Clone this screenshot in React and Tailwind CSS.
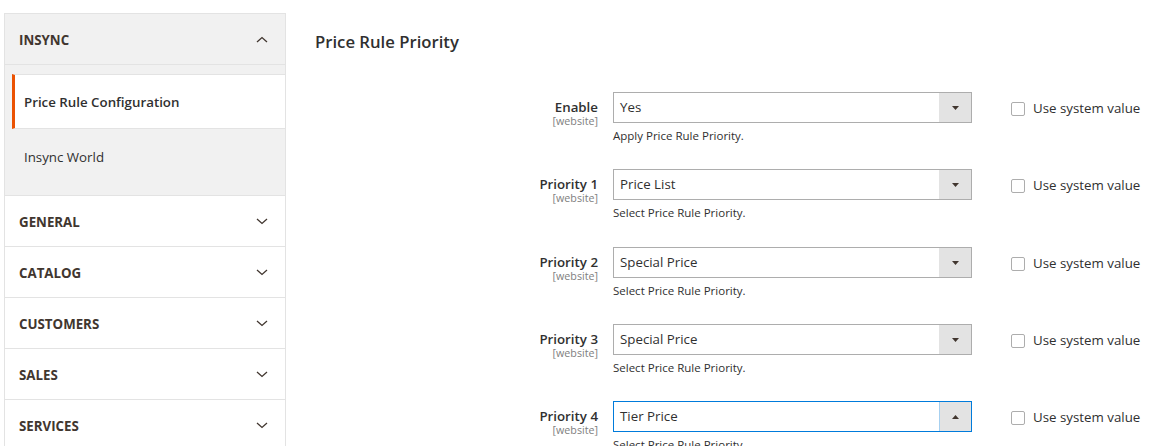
import React from "react";

const font = { fontFamily: '"Open Sans", "Noto Sans", sans-serif' };

function Chevron({ up }) {
  return (
    <svg width="12" height="7" viewBox="0 0 12 7" className="block">
      <polyline
        points={up ? "1,6 6,1.5 11,6" : "1,1 6,5.5 11,1"}
        fill="none"
        stroke="#41362f"
        strokeWidth="1.3"
      />
    </svg>
  );
}

function Section({ title }) {
  return (
    <div className="flex h-[51px] items-center justify-between border-b border-[#e3e3e3] bg-white pl-[14px] pr-[17px]">
      <span className="mt-[4px] text-[13.3px] font-bold uppercase text-[#41362f]">{title}</span>
      <Chevron />
    </div>
  );
}

function Row({ label, value, note, open, tall }) {
  return (
    <div className={"flex items-start " + (tall ? "h-[78px]" : "h-[77px]")}>
      <div className="w-[283px] pt-[7px] text-right">
        <div className="text-[13.3px] font-semibold leading-[16px] text-[#303030]">{label}</div>
        <div className="text-[10.7px] leading-[13px] text-[#808080]">[website]</div>
      </div>
      <div className="ml-[15px] w-[359px]">
        <div
          className={
            "flex h-[31px] items-stretch border bg-white " +
            (open ? "border-[#007bdb]" : "border-[#adadad]")
          }
        >
          <div className="flex flex-1 items-center pl-[6px] text-[13.3px] text-[#303030]">{value}</div>
          <div
            className={
              "flex w-[32px] items-center justify-center bg-[#e3e3e3] " +
              (open ? "border-l border-[#a6d0f0]" : "")
            }
          >
            <svg width="7" height="4" viewBox="0 0 7 4">
              <polygon points={open ? "0,4 7,4 3.5,0" : "0,0 7,0 3.5,4"} fill="#41362f" />
            </svg>
          </div>
        </div>
        <div className="mt-[5px] text-[11.5px] leading-[16px] text-[#303030]">{note}</div>
      </div>
      <div className="ml-[39px] flex h-[31px] items-center pt-[2px]">
        <div className="h-[14px] w-[14px] rounded-[2px] border border-[#adadad] bg-white" />
        <span className="ml-[8px] text-[13.3px] text-[#303030]">Use system value</span>
      </div>
    </div>
  );
}

export default function App() {
  return (
    <div className="flex h-[446px] w-[1171px] overflow-hidden bg-white" style={font}>
      <div className="ml-[4px] mt-[13px] w-[282px] shrink-0 border-x border-t border-[#e3e3e3]">
        <div className="flex h-[51px] items-center justify-between border-b border-[#e3e3e3] bg-[#f1f1f1] pl-[14px] pr-[17px]">
          <span className="mt-[4px] text-[13.3px] font-bold uppercase text-[#41362f]">Insync</span>
          <Chevron up />
        </div>
        <div className="bg-[#f1f1f1] pb-[1px] pl-[7px] pt-[9px]">
          <div className="flex h-[55px] items-center border-l-[3px] border-y border-y-[#e3e3e3] border-l-[#eb5202] bg-white pl-[9px] pt-[3px] text-[13.3px] font-semibold text-[#303030]">
            Price Rule Configuration
          </div>
          <div className="flex h-[55px] items-center pl-[12px] pt-[3px] text-[13.3px] text-[#303030]">Insync World</div>
          <div className="h-[10px]" />
        </div>
        <div className="border-t border-[#e3e3e3]">
          <Section title="General" />
          <Section title="Catalog" />
          <Section title="Customers" />
          <Section title="Sales" />
          <Section title="Services" />
        </div>
      </div>
      <div className="flex-1 pl-[29px]">
        <div className="mt-[31px] text-[16.7px] font-semibold leading-[22px] text-[#303030]">Price Rule Priority</div>
        <div className="mt-[39px]">
          <Row label="Enable" value="Yes" note="Apply Price Rule Priority." />
          <Row label="Priority 1" value="Price List" note="Select Price Rule Priority." tall />
          <Row label="Priority 2" value="Special Price" note="Select Price Rule Priority." />
          <Row label="Priority 3" value="Special Price" note="Select Price Rule Priority." />
          <Row label="Priority 4" value="Tier Price" note="Select Price Rule Priority." open />
        </div>
      </div>
    </div>
  );
}
